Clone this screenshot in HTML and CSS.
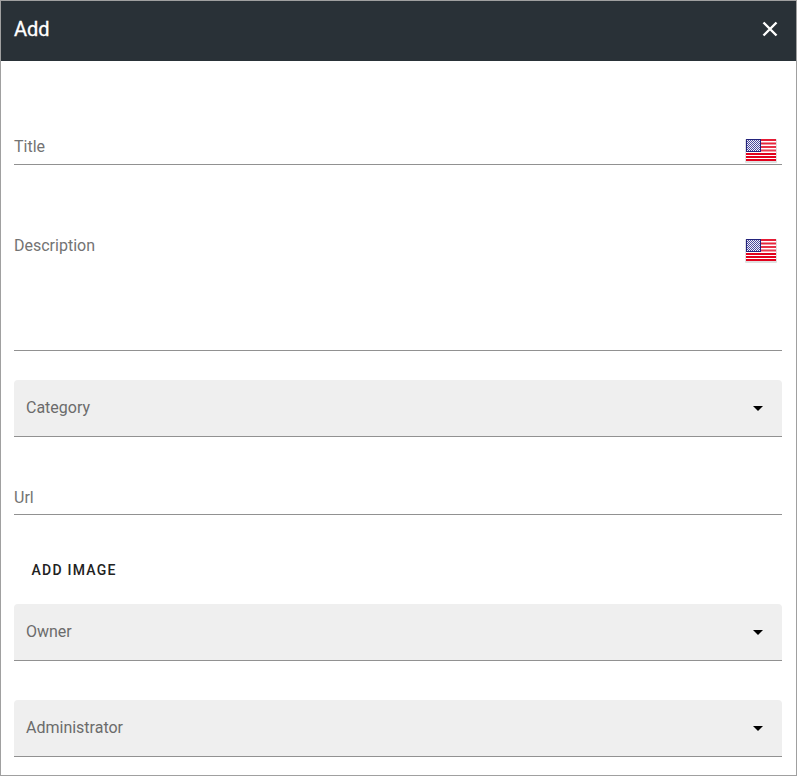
FILE: index.html
```html
<!DOCTYPE html>
<html lang="en">
<head>
<meta charset="utf-8">
<title>Add</title>
<link rel="stylesheet" href="styles.css">
</head>
<body>
<svg width="0" height="0" class="defs" aria-hidden="true">
  <defs>
    <pattern id="stars" width="2" height="2" patternUnits="userSpaceOnUse">
      <rect width="2" height="2" fill="#4a4a9c"/>
      <rect width="1" height="1" fill="#f0f0fa"/>
      <rect x="1" y="1" width="1" height="1" fill="#f0f0fa"/>
    </pattern>
    <linearGradient id="shine" x1="0" y1="0" x2="0" y2="1">
      <stop offset="0" stop-color="#fff" stop-opacity=".1"/>
      <stop offset="1" stop-color="#fff" stop-opacity=".25"/>
    </linearGradient>
    <symbol id="flag" viewBox="0 0 33 26">
      <rect x="0" y="1" width="32" height="24" rx="1" fill="#bbb" opacity=".45"/>
      <rect x="1" y="1" width="30" height="22" fill="#fff"/>
      <path d="M1 1h30v2h-30zM1 4.500h30v2h-30zM1 8h30v2h-30zM1 11.500h30v2h-30zM1 15h30v2h-30zM1 18h30v2h-30zM1 21h30v2h-30z" fill="#e2001c"/>
      <rect x="16" y="1" width="15" height="13" fill="url(#shine)"/>
      <rect x="1" y="1" width="15" height="13" fill="#24247c"/>
      <rect x="2" y="2" width="13" height="11" fill="url(#stars)"/>
    </symbol>
  </defs>
</svg>
<div class="dialog">
  <header class="header">
    <h1>Add</h1>
    <svg class="close" width="16" height="16" viewBox="0 0 16 16"><path d="M1.500 1.500l13 13M14.500 1.500l-13 13"/></svg>
  </header>
  <main class="form">
    <div class="field title"><label>Title</label><svg class="flag"><use href="#flag"/></svg></div>
    <div class="field description"><label>Description</label><svg class="flag"><use href="#flag"/></svg></div>
    <div class="select category"><label>Category</label><i class="arrow"></i></div>
    <div class="field url"><label>Url</label></div>
    <button class="add-image">ADD IMAGE</button>
    <div class="select owner"><label>Owner</label><i class="arrow"></i></div>
    <div class="select administrator"><label>Administrator</label><i class="arrow"></i></div>
  </main>
</div>
</body>
</html>
```
FILE: styles.css
```css
* { box-sizing: border-box; }
body { margin: 0; font-family: Roboto, sans-serif; background: #fff; }
.defs { display: block; }
.dialog { width: 797px; height: 776px; border: 1px solid #a0a0a0; overflow: hidden; }
.header {
  display: flex; align-items: center; justify-content: space-between;
  height: 60px; padding: 0 18px 4px 13px; background: #293137; color: #fff;
}
.header h1 { margin: 0; font-size: 20px; line-height: 24px; font-weight: 400; -webkit-text-stroke: .3px #fff; }
.close { fill: none; stroke: #fff; stroke-width: 2.4; }
.form { display: flex; flex-direction: column; padding: 0 14px 0 13px; }
.field {
  display: flex; justify-content: space-between; align-items: flex-start;
  border-bottom: 1px solid #919191; color: #737373;
}
label { font-size: 16px; line-height: 20px; }
.flag { display: block; width: 33px; height: 26px; margin: 1px 4px 0 0; flex: none; }
.title { height: 28px; margin-top: 76px; }
.description { height: 115px; margin-top: 71px; }
.description .flag { margin-top: 2px; }
.select {
  display: flex; align-items: center; justify-content: space-between;
  height: 57px; padding: 0 19px 1px 12px;
  background: #efefef; border-bottom: 1px solid #919191; border-radius: 4px 4px 0 0; color: #6b6b6b;
}
.arrow { margin-top: 2px; border: 5px solid transparent; border-top-color: #000; border-bottom: 0; }
.category { margin-top: 29px; }
.url { height: 27px; margin-top: 51px; }
.add-image {
  align-self: flex-start; height: 36px; margin: 37px 0 16px; padding: 0 17.5px;
  border: 0; background: none; color: #222;
  font: 500 14px/36px Roboto, sans-serif; letter-spacing: 1.25px;
}
.administrator { margin-top: 39px; }
```
